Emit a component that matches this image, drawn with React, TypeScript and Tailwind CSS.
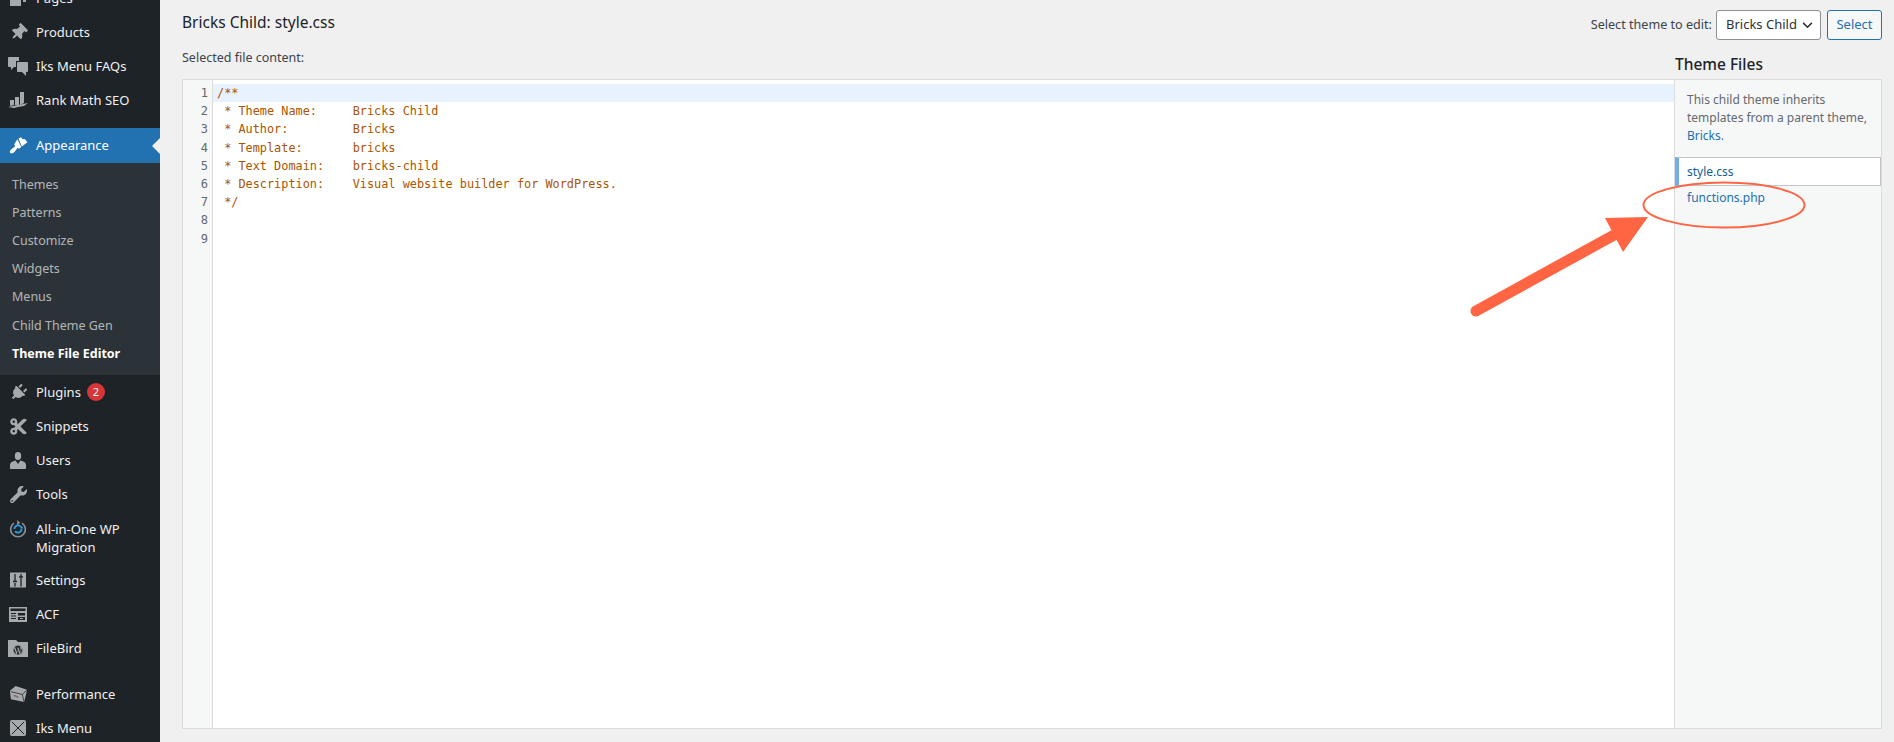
import { FaPlug, FaCut, FaWrench, FaWordpress, FaThumbtack } from 'react-icons/fa';
import { ReactNode } from 'react';

const SANS = "font-['Noto_Sans','Open_Sans',sans-serif]";

function BubblesIcon() {
  return (
    <svg viewBox="0 0 20 19" className="w-[20px] h-[19px]" fill="#a7aaad">
      <path d="M1 0h10v4H8v6H6l-3 3v-3H1a1 1 0 0 1-1-1V1a1 1 0 0 1 1-1z" />
      <path d="M10 5h9a1 1 0 0 1 1 1v8a1 1 0 0 1-1 1h-1v4l-4-4h-4a1 1 0 0 1-1-1V6a1 1 0 0 1 1-1z" />
    </svg>
  );
}

function RankIcon() {
  return (
    <svg viewBox="0 0 20 16" className="w-[20px] h-[16px]" fill="#a7aaad">
      <path d="M2 8h4l0 5-4 1zM7 5h4v8l-4 0zM12 0h4v11l-4 2z" />
      <path d="M0 15l20-4-4 3-6 1-4 1z" />
    </svg>
  );
}

function BrushIcon() {
  return (
    <svg viewBox="0 0 20 18" className="w-[19px] h-[17px]" fill="#fff">
      <path d="M10 1.5l2.5-1.2 2 2 2-.3 3 3.5L13.5 10z" />
      <path d="M8.8 2.5l4.2 8.2-2.6 1.8-1.4-1.1-2.6 3.6c-1.2 1.7-3.6 3.2-5 2-1.3-1.3-.3-3.2 1.4-4.4l3.8-2.7-1.2-1.9z" />
    </svg>
  );
}

function UserIcon() {
  return (
    <svg viewBox="0 0 16 17" className="w-[16px] h-[17px]" fill="#a7aaad">
      <ellipse cx="8" cy="4" rx="3.2" ry="4" />
      <path d="M5.5 8.5C3 9.5 0 10 0 13v3c0 .6.4 1 1 1h14c.6 0 1-.4 1-1v-3c0-3-3-3.5-5.5-4.500L8 12z" />
    </svg>
  );
}

function MigrationIcon() {
  return (
    <svg viewBox="0 0 20 20" className="w-[18px] h-[18px]" fill="none">
      <path d="M5.500 3.500A8.200 8.200 0 1 0 14.500 3.500" stroke="#8a8f94" strokeWidth="1.8" />
      <path d="M6 10a4 4 0 0 1 7.200-2.400M14 10a4 4 0 0 1-7.200 2.400" stroke="#2f9bd9" strokeWidth="2" />
      <path d="M9 0l3.500 3L9 6z" fill="#8a8f94" />
      <path d="M12 9.500h4l-2-3z" fill="#2f9bd9" />
    </svg>
  );
}

function SettingsIcon() {
  return (
    <svg viewBox="0 0 16 16" className="w-[16px] h-[16px]">
      <rect width="16" height="15" y="0.500" fill="#a7aaad" />
      <path d="M5 2v7M3 9.500h4M5 11v3.500M11 2v2.500M9 5h4M11 6v8.500" stroke="#1d2327" strokeWidth="1.300" />
    </svg>
  );
}

function AcfIcon() {
  return (
    <svg viewBox="0 0 18 15" className="w-[18px] h-[15px]">
      <rect width="18" height="15" fill="#a7aaad" />
      <path d="M1.500 1.500h15v2.500h-15zM2 6h5v1H2zM2 8.500h5v1H2zM2 11h5v1H2zM9 6h7v2.500H9zM9 10h7v3H9z" fill="#1d2327" />
      <rect x="11" y="11" width="3" height="1" fill="#a7aaad" />
    </svg>
  );
}

function FolderIcon() {
  return (
    <div className="relative w-[20px] h-[18px]">
      <svg viewBox="0 0 20 18" className="w-[20px] h-[18px]" fill="#a7aaad">
        <path d="M0 1h8l2 2h10v15H0z" />
      </svg>
      <FaWordpress className="absolute left-[5px] top-[6px] w-[10px] h-[10px] text-[#1d2327]" />
    </div>
  );
}

function PerformanceIcon() {
  return (
    <svg viewBox="0 0 20 20" className="w-[19px] h-[19px]">
      <path d="M7 1l12 4-3 13-14-3-1-9z" fill="#a7aaad" />
      <path d="M2 7l12 3 5-5M14 10l2 8" stroke="#1d2327" strokeWidth="0.800" fill="none" />
      <path d="M5 11l5 2" stroke="#8a5a5a" strokeWidth="1.500" />
    </svg>
  );
}

function IksIcon() {
  return (
    <svg viewBox="0 0 16 16" className="w-[16px] h-[16px]">
      <rect width="16" height="16" rx="2" fill="#a7aaad" />
      <path d="M2 2l12 12M14 2L2 14" stroke="#1d2327" strokeWidth="1" />
    </svg>
  );
}

function PagesIcon() {
  return (
    <svg viewBox="0 0 16 16" className="w-[16px] h-[16px]" fill="#a7aaad">
      <path d="M0 3h11v13H0zM4 0h12v12h-3V2H4z" />
    </svg>
  );
}

function MenuRow({ icon, label, badge, className = '' }: { icon: ReactNode; label: string; badge?: string; className?: string }) {
  return (
    <div className={`flex items-center h-[34px] shrink-0 ${className}`}>
      <div className="w-[36px] flex justify-center text-[#a7aaad] shrink-0">{icon}</div>
      <span className="text-[#f0f0f1] pt-[2px]">{label}</span>
      {badge && (
        <span className="ml-[6px] w-[18px] h-[18px] rounded-full bg-[#d63638] text-white text-[11px] flex items-center justify-center">{badge}</span>
      )}
    </div>
  );
}

const codeLines = [
  '/**',
  ' * Theme Name:     Bricks Child',
  ' * Author:         Bricks',
  ' * Template:       bricks',
  ' * Text Domain:    bricks-child',
  ' * Description:    Visual website builder for WordPress.',
  ' */',
  '',
  '',
];

const subItems = ['Themes', 'Patterns', 'Customize', 'Widgets', 'Menus'];

export default function App() {
  return (
    <div className={`relative flex h-[742px] w-[1894px] overflow-hidden bg-[#f0f0f1] text-[13px] text-[#3c434a] ${SANS}`}>
      {/* admin menu */}
      <aside className="w-[160px] shrink-0 bg-[#1d2327] text-[13px] overflow-hidden">
        <div className="-mt-[19px]">
          <MenuRow icon={<PagesIcon />} label="Pages" />
          <MenuRow icon={<FaThumbtack className="w-[17px] h-[17px] rotate-45" />} label="Products" />
          <MenuRow icon={<BubblesIcon />} label="Iks Menu FAQs" />
          <MenuRow icon={<RankIcon />} label="Rank Math SEO" />
        </div>
        <div className="relative mt-[11px] h-[35px] bg-[#2271b1] flex items-center">
          <div className="w-[36px] flex justify-center"><BrushIcon /></div>
          <span className="text-white">Appearance</span>
          <span className="absolute right-0 top-[10px] border-y-[8px] border-r-[8px] border-y-transparent border-r-[#f0f0f1]" />
        </div>
        <div className="bg-[#2c3338] h-[212px] pt-[8px]">
          {subItems.map((item) => (
            <div key={item} className="h-[28px] pl-[12px] flex items-center text-[#f0f0f1b3] text-[12.5px]">{item}</div>
          ))}
          <div className="mt-[1px] h-[28px] pl-[12px] flex items-center text-[#f0f0f1b3] text-[12.5px]">Child Theme Gen</div>
          <div className="h-[28px] pl-[12px] flex items-center text-white font-bold text-[12.5px]">Theme File Editor</div>
        </div>
        <MenuRow icon={<FaPlug className="w-[17px] h-[17px] rotate-45" />} label="Plugins" badge="2" />
        <MenuRow icon={<FaCut className="w-[19px] h-[19px]" />} label="Snippets" />
        <MenuRow icon={<UserIcon />} label="Users" />
        <MenuRow icon={<FaWrench className="w-[17px] h-[17px]" />} label="Tools" />
        <div className="flex items-start pt-[8px] h-[52px]">
          <div className="w-[36px] flex justify-center pt-[1px]"><MigrationIcon /></div>
          <span className="text-[#f0f0f1] leading-[18px] pt-[1px]">All-in-One WP<br />Migration</span>
        </div>
        <MenuRow icon={<SettingsIcon />} label="Settings" />
        <MenuRow icon={<AcfIcon />} label="ACF" />
        <MenuRow icon={<FolderIcon />} label="FileBird" />
        <MenuRow icon={<PerformanceIcon />} label="Performance" className="mt-[12px]" />
        <MenuRow icon={<IksIcon />} label="Iks Menu" />
      </aside>

      {/* editor page */}
      <main className="flex-1 min-w-0 pl-[22px] pr-[12px] flex flex-col">
        <div className="flex items-start justify-between pt-[10px] h-[39px]">
          <h1 className="text-[15.5px] leading-[24px] text-[#1d2327]">Bricks Child: style.css</h1>
          <div className="flex items-center">
            <span className="text-[12.6px] mr-[4px]">Select theme to edit:</span>
            <div className="w-[105px] h-[30px] bg-white border border-[#8c8f94] rounded-[3px] flex items-center justify-between pl-[9px] pr-[7px] text-[#2c3338]">
              <span>Bricks Child</span>
              <svg viewBox="0 0 12 8" className="w-[11px] h-[7px]" fill="none" stroke="#2c3338" strokeWidth="1.800"><path d="M1 1l5 5 5-5" /></svg>
            </div>
            <div className="ml-[6px] w-[55px] h-[30px] bg-[#f6f7f7] border border-[#2271b1] rounded-[3px] flex items-center justify-center text-[#2271b1]">Select</div>
          </div>
        </div>
        <div className="flex justify-between items-center h-[40px]">
          <span className="text-[12.5px] pb-[2px]">Selected file content:</span>
          <span className="w-[207px] text-[15.5px] font-medium text-[#1d2327] pt-[11px]">Theme Files</span>
        </div>
        <div className="flex h-[650px] border border-[#dcdcde] bg-white">
          <div className="flex-1 flex min-w-0 pt-[4px] font-['DejaVu_Sans_Mono',monospace] text-[11.87px] leading-[18.2px]">
            <div className="w-[30px] shrink-0 -mt-[4px] pt-[4px] bg-[#f6f7f7] border-r border-[#dcdcde] text-right pr-[4px] text-[#646970] text-[12px]">
              {codeLines.map((_, i) => <div key={i}>{i + 1}</div>)}
            </div>
            <div className="flex-1 min-w-0 text-[#aa5500]">
              {codeLines.map((line, i) => (
                <div key={i} className={`h-[18.2px] pl-[4px] whitespace-pre ${i === 0 ? 'bg-[#e8f2ff]' : ''}`}>{line}</div>
              ))}
            </div>
          </div>
          <div className="w-[207px] shrink-0 bg-[#f6f7f7] border-l border-[#dcdcde]">
            <p className="pl-[12px] pr-[8px] pt-[11px] text-[#646970] text-[12px] leading-[18px]">
              This child theme inherits templates from a parent theme, <span className="text-[#2271b1]">Bricks</span>.
            </p>
            <div className="mt-[12px] h-[29px] bg-white border border-[#c3c4c7] border-l-[4px] border-l-[#72aee6] pl-[8px] flex items-center text-[#135e96] text-[12px]">style.css</div>
            <div className="mt-[3px] pl-[12px] text-[#2271b1] text-[12px] leading-[18px]">functions.php</div>
          </div>
        </div>
      </main>

      {/* annotation drawn over the page */}
      <svg className="absolute left-0 top-0 pointer-events-none" width="1894" height="742" fill="none">
        <ellipse cx="1724" cy="205" rx="80.500" ry="22.500" stroke="#ff6543" strokeWidth="2" />
        <path d="M1476 311L1625 229" stroke="#ff6543" strokeWidth="11" strokeLinecap="round" />
        <path d="M1648 217L1605 218L1623 252Z" fill="#ff6543" />
      </svg>
    </div>
  );
}
